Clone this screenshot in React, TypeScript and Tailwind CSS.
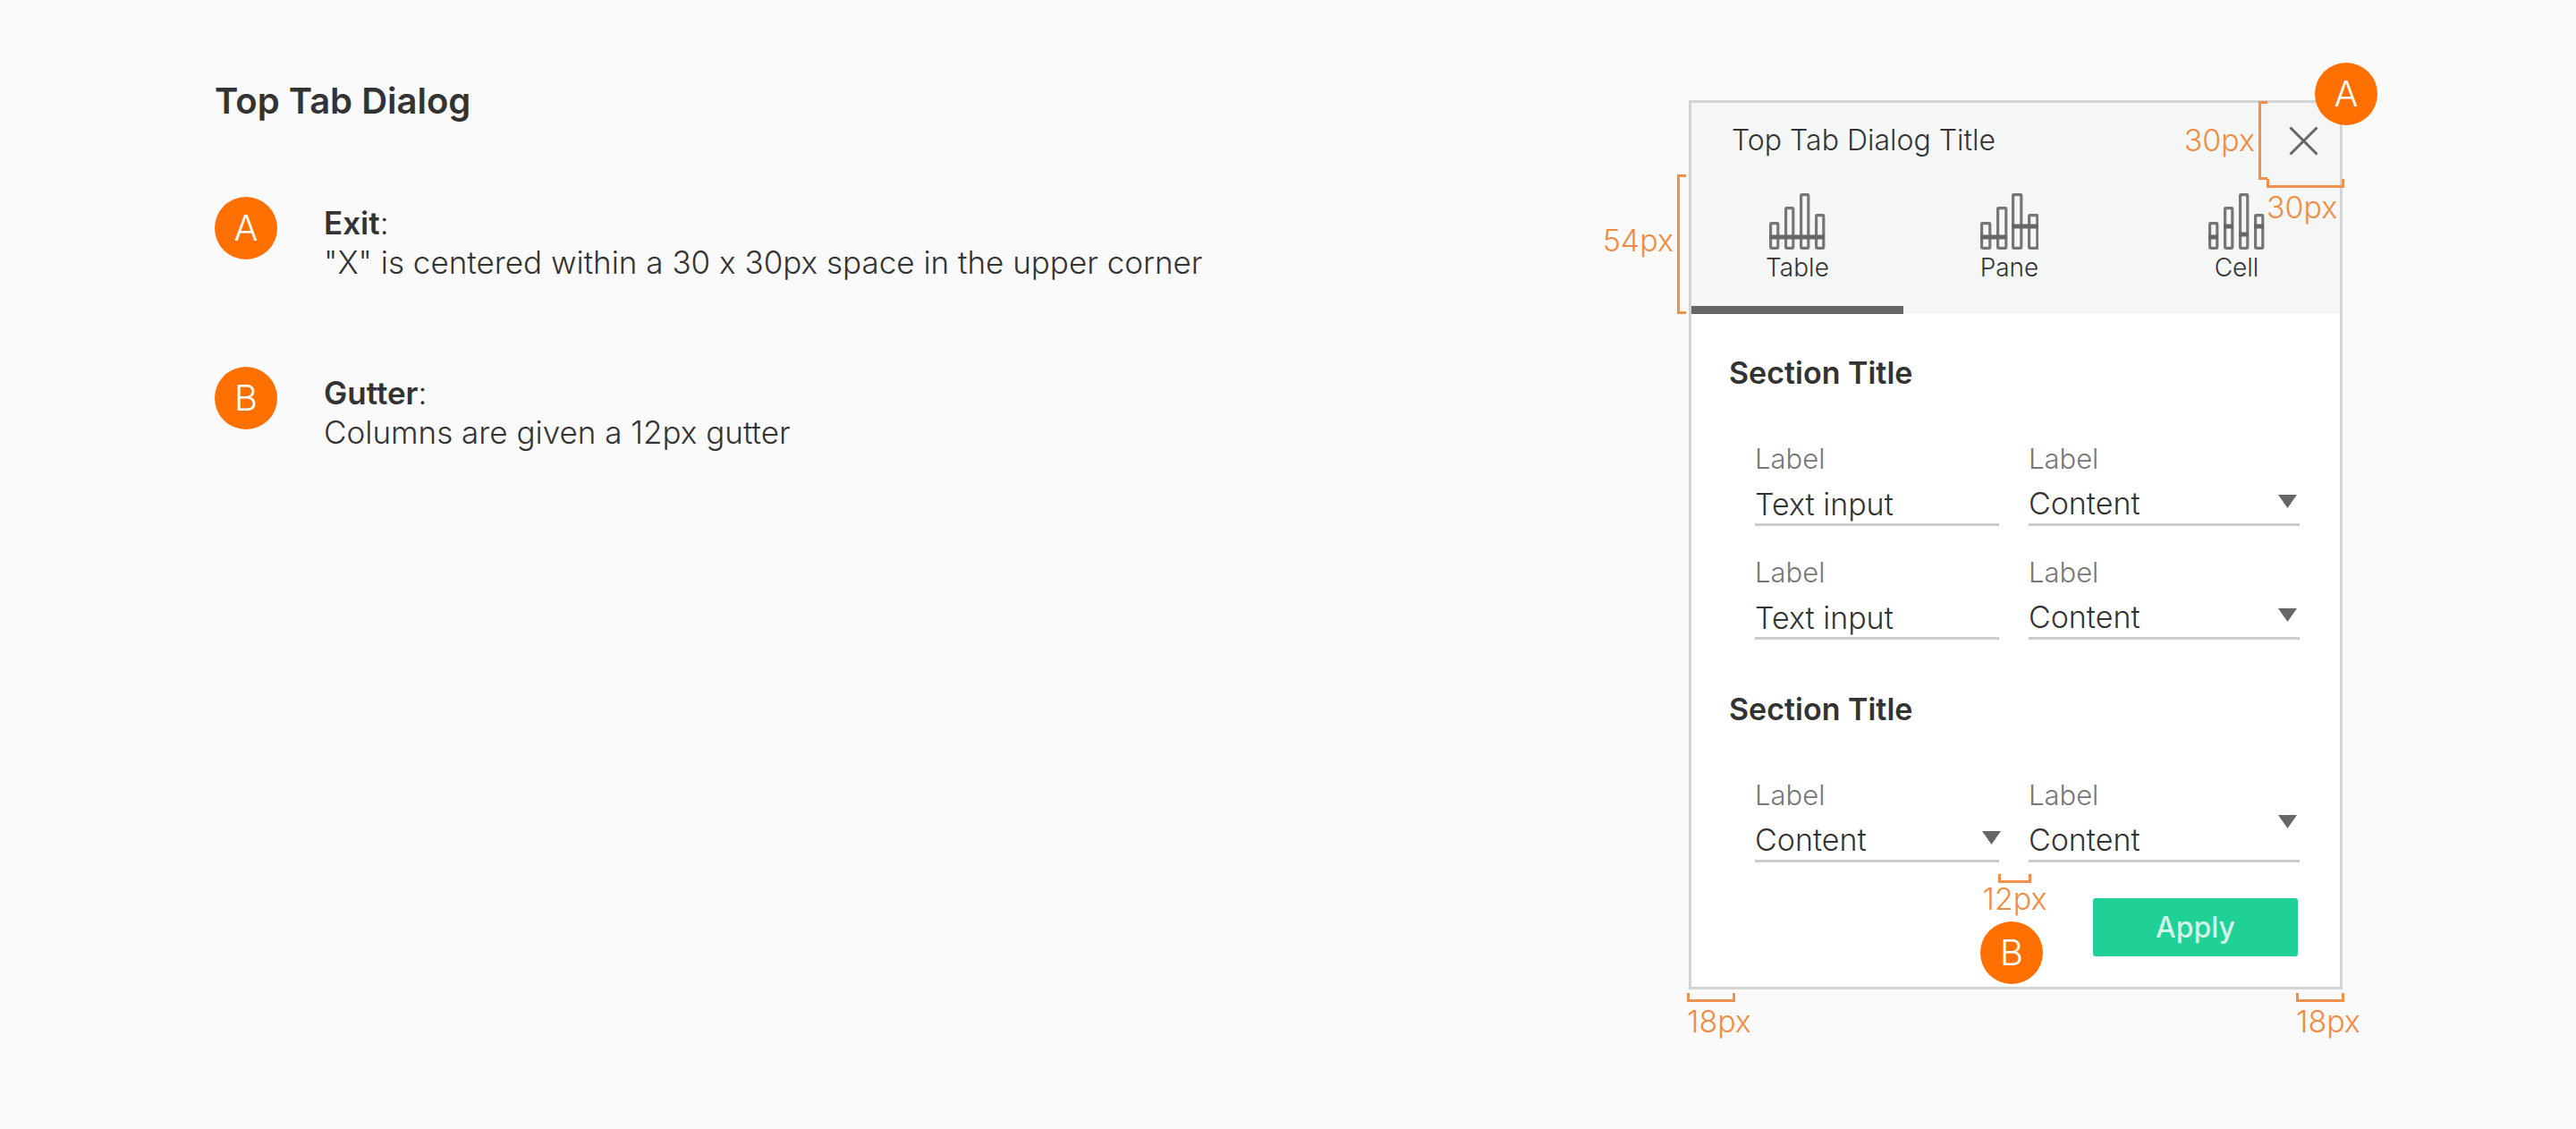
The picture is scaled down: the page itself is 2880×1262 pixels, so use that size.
import React, { useState } from 'react';

type Segment = { x1: number; x2: number; y: number };
type TabItem = {
  id: string;
  label: string;
  width: number;
  barWidth: number;
  xs: number[];
  segments: Segment[];
  className: string;
};

const BAR_TOPS = [32, 15, 0, 23];

const TABS: TabItem[] = [
  {
    id: 'table',
    label: 'Table',
    width: 63,
    barWidth: 11,
    xs: [0, 17, 34, 51],
    segments: [{ x1: 0, x2: 62, y: 49 }],
    className: '',
  },
  {
    id: 'pane',
    label: 'Pane',
    width: 65,
    barWidth: 12,
    xs: [0, 18, 35, 53],
    segments: [
      { x1: 0, x2: 30, y: 49 },
      { x1: 35, x2: 65, y: 37 },
    ],
    className: '',
  },
  {
    id: 'cell',
    label: 'Cell',
    width: 63,
    barWidth: 11,
    xs: [0, 17, 34, 51],
    segments: [
      { x1: 0, x2: 11, y: 49 },
      { x1: 17, x2: 28, y: 37 },
      { x1: 34, x2: 45, y: 46 },
      { x1: 51, x2: 62, y: 37 },
    ],
    className: 'pl-5',
  },
];

function BarsIcon({ tab }: { tab: TabItem }) {
  return (
    <svg width={tab.width} height={63} viewBox={`0 0 ${tab.width} 63`} fill="none" aria-hidden="true">
      {tab.xs.map((x, i) => (
        <rect
          key={x}
          x={x + 1.6}
          y={BAR_TOPS[i] + 1.6}
          width={tab.barWidth - 2.8}
          height={63 - BAR_TOPS[i] - 3.2}
          rx={0.8}
          stroke="#757676"
          strokeWidth={3.2}
        />
      ))}
      {tab.segments.map((s) => (
        <path key={s.x1} d={`M${s.x1} ${s.y}H${s.x2}`} stroke="#666666" strokeWidth={5} />
      ))}
    </svg>
  );
}

function Badge({ letter, className = '' }: { letter: string; className?: string }) {
  return (
    <span
      className={`flex size-[70px] shrink-0 items-center justify-center rounded-full bg-[#ff7000] text-[40px] font-light text-white ${className}`}
    >
      {letter}
    </span>
  );
}

function Note({ letter, term, text }: { letter: string; term: string; text: string }) {
  return (
    <li className="flex gap-[52px]">
      <Badge letter={letter} />
      <p className="pt-[7px] text-[35px] leading-[44px] font-light">
        <strong className="font-semibold">{term}</strong>:
        <br />
        {text}
      </p>
    </li>
  );
}

const fieldClass =
  'block h-[47px] w-full appearance-none rounded-none border-b-3 border-[#cccccc] bg-transparent p-0 text-[34px] leading-[44px] font-light text-[#333333] outline-none';
const labelClass = 'mb-2 block text-[31px] leading-[40px] font-light text-[#777777]';

function TextField({ id }: { id: string }) {
  return (
    <div>
      <label htmlFor={id} className={labelClass}>
        Label
      </label>
      <input id={id} type="text" defaultValue="Text input" className={fieldClass} />
    </div>
  );
}

function SelectField({ id, arrow = 'top-3 right-[3px]' }: { id: string; arrow?: string }) {
  return (
    <div>
      <label htmlFor={id} className={labelClass}>
        Label
      </label>
      <div className="relative">
        <select id={id} className={fieldClass}>
          <option>Content</option>
        </select>
        <svg
          className={`pointer-events-none absolute ${arrow}`}
          width="21"
          height="15"
          viewBox="0 0 21 15"
          aria-hidden="true"
        >
          <path d="M0 0H21L10.500 15Z" fill="#666666" />
        </svg>
      </div>
    </div>
  );
}

function Section({ children, className }: { children: React.ReactNode; className: string }) {
  return (
    <section className={className}>
      <h3 className="pl-[42px] text-[34px] leading-[44px] font-semibold">Section Title</h3>
      <div className="mt-[54px] grid grid-cols-[272fr_302fr] gap-x-[33px] gap-y-8 pr-[45px] pl-[71px]">
        {children}
      </div>
    </section>
  );
}

const measureClass =
  'pointer-events-none absolute flex text-[34px] leading-[36px] font-light whitespace-nowrap text-[#f08c42]';
const bracketClass = 'shrink-0 border-3 border-[#ef904c]';

function Dialog() {
  const [active, setActive] = useState('table');
  return (
    <div
      role="dialog"
      aria-labelledby="dialog-title"
      className="relative w-full max-w-[731px] border-3 border-[#d3d4d4] bg-white"
    >
      <header className="bg-[#f5f7f7]">
        <div className="flex h-[84px] items-center justify-between">
          <h2 id="dialog-title" className="pl-[45px] text-[32px] font-light">
            Top Tab Dialog Title
          </h2>
          <button type="button" aria-label="Close" className="flex h-full w-[82px] items-center justify-center">
            <svg width="33" height="33" viewBox="0 0 33 33" fill="none" stroke="#666666" strokeWidth="3" aria-hidden="true">
              <path d="M1.500 1.500L31.500 31.500M31.500 1.500L1.500 31.500" />
            </svg>
          </button>
        </div>
        <div role="tablist" className="grid grid-cols-[237fr_237fr_251fr]">
          {TABS.map((tab) => (
            <button
              key={tab.id}
              type="button"
              role="tab"
              aria-selected={active === tab.id}
              onClick={() => setActive(tab.id)}
              className={`flex h-[152px] flex-col items-center border-b-9 pt-[17px] ${
                active === tab.id ? 'border-[#666666]' : 'border-transparent'
              } ${tab.className}`}
            >
              <BarsIcon tab={tab} />
              <span className="text-[28px] leading-[40px] font-light">{tab.label}</span>
            </button>
          ))}
        </div>
      </header>

      <form className="flex flex-col pb-[34px]" onSubmit={(e) => e.preventDefault()}>
        <Section className="pt-11">
          <TextField id="text-1" />
          <SelectField id="select-1" />
          <TextField id="text-2" />
          <SelectField id="select-2" />
        </Section>
        <Section className="pt-14">
          <SelectField id="select-3" arrow="top-3 -right-[2px]" />
          <SelectField id="select-4" arrow="-top-[6px] right-[3px]" />
        </Section>
        <button
          type="submit"
          className="mt-10 mr-[47px] h-[65px] w-[229px] self-end rounded-[3px] bg-[#1fd097] text-[32px] font-medium text-[#d2f6ea]"
        >
          Apply
        </button>
      </form>

      {/* Measurement callouts */}
      <div className={`${measureClass} top-20 right-full mr-[6px] h-[156px] items-center gap-1`}>
        <span className="pb-2">54px</span>
        <span className={`${bracketClass} h-full w-[10px] border-r-0`} />
      </div>
      <div className={`${measureClass} -top-[2px] right-[81px] h-[88px] items-center gap-1`}>
        <span>30px</span>
        <span className={`${bracketClass} h-full w-[10px] border-r-0`} />
      </div>
      <div className={`${measureClass} top-[85px] -right-[5px] w-[87px] flex-col gap-1`}>
        <span className={`${bracketClass} h-[10px] border-t-0`} />
        <span>30px</span>
      </div>
      <div className={`${measureClass} top-[862px] left-[343px] w-[37px] flex-col`}>
        <span className={`${bracketClass} h-[10px] border-t-0`} />
        <span className="self-center">12px</span>
      </div>
      <div className={`${measureClass} top-full -left-[5px] mt-[7px] w-[54px] flex-col gap-1`}>
        <span className={`${bracketClass} h-[10px] border-t-0`} />
        <span>18px</span>
      </div>
      <div className={`${measureClass} top-full -right-[5px] mt-[7px] w-[54px] flex-col gap-1`}>
        <span className={`${bracketClass} h-[10px] border-t-0`} />
        <span>18px</span>
      </div>
      <Badge letter="A" className="absolute -top-[45px] -right-[42px]" />
      <Badge letter="B" className="absolute top-[915px] left-[323px]" />
    </div>
  );
}

export default function App() {
  return (
    <main className="flex min-h-screen items-start gap-16 bg-[#fafafa] pr-[261px] pb-[156px] pl-[240px] font-['Inter',sans-serif] text-[#333333] [font-feature-settings:'calt'_0]">
      <div className="flex-1 pt-[85px]">
        <h1 className="text-[40px] leading-[56px] font-semibold">Top Tab Dialog</h1>
        <ul className="mt-[79px] flex flex-col gap-[95px]">
          <Note letter="A" term="Exit" text={'"X" is centered within a 30 x 30px space in the upper corner'} />
          <Note letter="B" term="Gutter" text="Columns are given a 12px gutter" />
        </ul>
      </div>
      <div className="flex flex-1 justify-end pt-[112px]">
        <Dialog />
      </div>
    </main>
  );
}
